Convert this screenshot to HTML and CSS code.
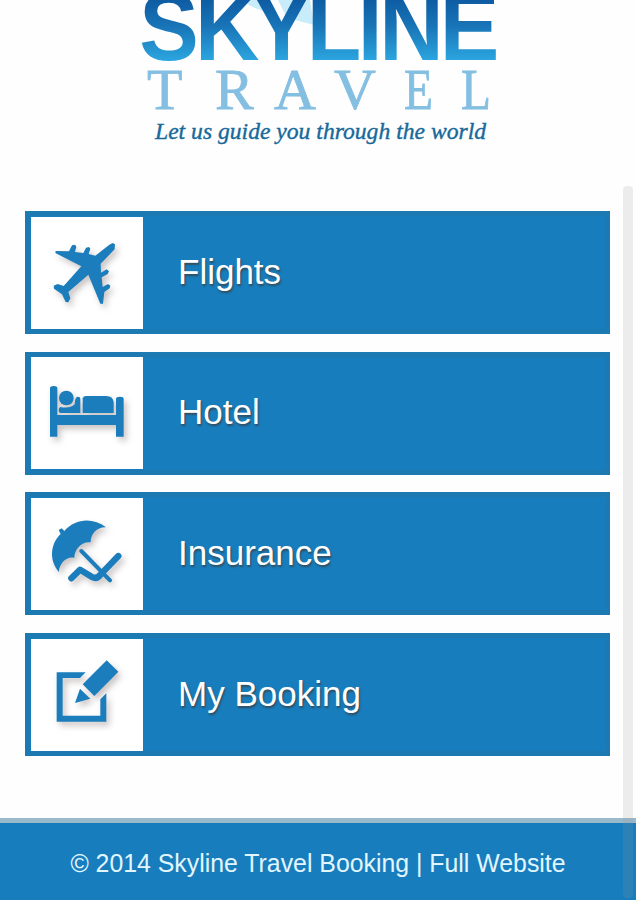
FILE: index.html
```html
<!DOCTYPE html>
<html lang="en">
<head>
  <meta charset="utf-8"/>
  <meta name="viewport" content="width=device-width, initial-scale=1.0"/>
  <title>Skyline Travel</title>
  <link rel="stylesheet" href="styles.css">
</head>
<body>
  <header class="header">
    <svg class="logo" viewBox="0 0 376 160" role="img" aria-label="Skyline Travel">
      <defs>
        <linearGradient id="sky" gradientUnits="userSpaceOnUse" x1="0" y1="-8" x2="0" y2="60">
          <stop offset="0" stop-color="#0b559d"/>
          <stop offset="0.5" stop-color="#1874b7"/>
          <stop offset="1" stop-color="#2ba5df"/>
        </linearGradient>
      </defs>
      <path d="M112 0 Q120 7 133 11 L140 0 Z M148 0 L157 18 L184 25 L180 0 Z" fill="#c9ecfa"/>
      <g transform="scale(.93 1)">
        <text class="logo-main" x="10 70 131 190 245 268 333" y="60">SKYLINE</text>
      </g>
      <text class="logo-sub" y="109"><tspan x="17 85 144 204">TRAV</tspan><tspan x="274" textLength="29" lengthAdjust="spacingAndGlyphs">E</tspan><tspan x="331" textLength="30" lengthAdjust="spacingAndGlyphs">L</tspan></text>
      <text class="logo-tag" x="25" y="139" textLength="331" lengthAdjust="spacingAndGlyphs">Let us guide you through the world</text>
    </svg>
  </header>

  <nav class="menu">
    <a class="menu-item" href="#">
      <span class="menu-icon">
        <svg viewBox="33 36 336 336">
          <path d="M268 119 L278 114 L285 118 L284 133 L242 176 L243 203 L260 193 L267 199 L263 207 L245 217 L248 246 L264 237 L271 242 L269 250 L253 261 L249 296 L241 296 L205 209 L145 261 L151 280 L145 292 L137 291 L126 268 L102 251 L101 242 L113 237 L131 243 L184 184 L106 144 L107 138 L147 139 L156 121 L165 119 L169 125 L165 141 L190 144 L198 128 L207 126 L211 131 L206 147 L226 152 Z"/>
        </svg>
      </span>
      <span class="menu-label">Flights</span>
    </a>
    <a class="menu-item" href="#">
      <span class="menu-icon">
        <svg viewBox="33 34 336 336">
          <path d="M90 127 Q90 121 101 121 Q112 121 112 127 V208 H288 V159 Q288 153 300 153 Q311 153 311 159 V273 H288 V238 H112 V273 H90 Z"/>
          <circle cx="139" cy="157" r="22"/>
          <path d="M121 184 Q149 190 164 176 Q165 153 173 153 Q181 153 181 160 V202 H123 Q116 202 116 193 Q116 187 121 184 Z"/>
          <path d="M188 158 Q190 151 198 151 H258 Q279 151 281 169 V202 H188 Z"/>
        </svg>
      </span>
      <span class="menu-label">Hotel</span>
    </a>
    <a class="menu-item" href="#">
      <span class="menu-icon">
        <svg viewBox="33 29 336 336">
          <path d="M116 125 L125 120 L133 128 C165 91 218 86 258 117 C232 115 211 137 212 162 C187 157 162 183 163 209 C142 202 117 225 117 251 C85 215 92 165 122 137 Z"/>
          <path class="stroke-thin" d="M184 188 L270 276"/>
          <path class="stroke-thick" d="M154 270 L180 244 L216 266 Q231 274 242 258 L295 203"/>
        </svg>
      </span>
      <span class="menu-label">Insurance</span>
    </a>
    <a class="menu-item" href="#">
      <span class="menu-icon">
        <svg viewBox="33 31 336 336">
          <path d="M110 131 H197 L180 148 H128 V261 H241 V212 L259 194 V279 H110 Z"/>
          <path d="M260 95 L295 129 L223 202 L188 167 Z"/>
          <path d="M180 180 L211 210 L165 223 Z"/>
        </svg>
      </span>
      <span class="menu-label">My Booking</span>
    </a>
  </nav>

  <footer class="footer">© 2014 Skyline Travel Booking | <a href="#">Full Website</a></footer>
  <div class="scroll-thumb"></div>
</body>
</html>
```

FILE: styles.css
```css
* { box-sizing:border-box; }
body { background:#fefefe; color:#fff; font-family:"Liberation Sans", Arial, sans-serif; margin:0; height:900px; overflow:hidden; display:flex; flex-direction:column; }
a { color:inherit; text-decoration:none; }

.header { height:211px; flex:none; padding-left:130px; }
.logo { display:block; width:376px; height:160px; }
.logo-main { font-family:"Liberation Sans", Arial, sans-serif; font-weight:bold; font-size:96px; fill:url(#sky); }
.logo-sub { font-family:"Liberation Serif", "Times New Roman", serif; font-size:58px; fill:#84bfe2; stroke:#84bfe2; stroke-width:.8px; }
.logo-tag { font-family:"Liberation Serif", "Times New Roman", serif; font-style:italic; font-size:24px; fill:#17699b; stroke:#17699b; stroke-width:.4px; }

.menu { display:flex; flex-direction:column; gap:17.7px; padding:0 26px 0 25px; }
.menu-item { display:flex; align-items:center; height:123px; padding-left:6px; background:#177dbd; box-shadow:inset 0 0 0 5px #1d79b2; }
.menu-icon { width:112px; height:112px; background:#fff; }
.menu-icon svg { display:block; width:112px; height:112px; fill:#1b7dbb; filter:drop-shadow(3px 4px 3px rgba(80,60,60,.3)); }
.menu-label { margin-left:35px; padding-bottom:2px; font-size:35px; line-height:40px; text-shadow:1px 2px 2px rgba(60,60,60,.75); }

.stroke-thin { fill:none; stroke:#1b7dbb; stroke-width:12px; stroke-linecap:round; }
.stroke-thick { fill:none; stroke:#1b7dbb; stroke-width:19px; stroke-linecap:round; stroke-linejoin:round; }

.footer { margin-top:auto; height:82px; flex:none; border-top:5px solid #9ab9ca; background:#177dbd; color:#e2f6ff; font-size:24.85px; line-height:82px; text-align:center; white-space:nowrap; }

/* overlay scrollbar */
.scroll-thumb { position:absolute; top:186px; right:3px; width:10px; height:712px; border-radius:4px; background:rgba(150,150,150,.17); }
```
